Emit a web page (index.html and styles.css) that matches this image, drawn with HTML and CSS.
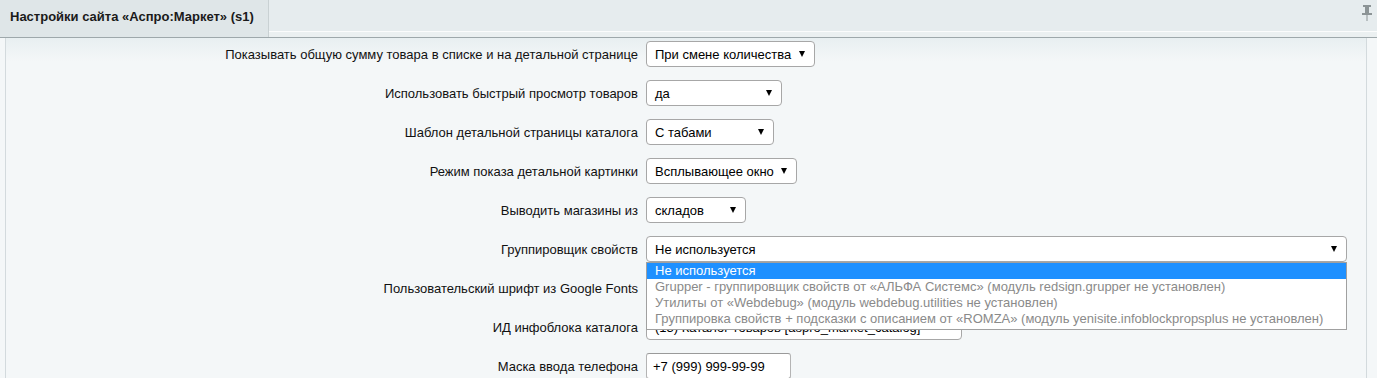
FILE: index.html
```html
<!DOCTYPE html>
<html lang="ru">
<head>
<meta charset="utf-8">
<title>Настройки сайта</title>
<link rel="stylesheet" href="styles.css">
</head>
<body>
<div class="header">
  <div class="tab">Настройки сайта «Аспро:Маркет» (s1)</div>
  <div class="header-rest">
    <div class="rest-top">
      <svg class="pin" width="10" height="16" viewBox="0 0 10 16">
        <rect x="1" y="0" width="8" height="2" fill="#8c9496"/>
        <rect x="3" y="2" width="4" height="6" fill="#8c9496"/>
        <rect x="0" y="8" width="10" height="2" fill="#8c9496"/>
        <rect x="4.5" y="10" width="1" height="6" fill="#8c9496"/>
      </svg>
    </div>
    <div class="rest-bottom"></div>
  </div>
</div>
<div class="panel">
  <div class="form">
    <div class="label">Показывать общую сумму товара в списке и на детальной странице</div>
    <div class="control"><div class="select w1"><span>При смене количества</span><span class="arrow"></span></div></div>

    <div class="label">Использовать быстрый просмотр товаров</div>
    <div class="control"><div class="select w2"><span>да</span><span class="arrow"></span></div></div>

    <div class="label">Шаблон детальной страницы каталога</div>
    <div class="control"><div class="select w3"><span>С табами</span><span class="arrow"></span></div></div>

    <div class="label">Режим показа детальной картинки</div>
    <div class="control"><div class="select w4"><span>Всплывающее окно</span><span class="arrow"></span></div></div>

    <div class="label">Выводить магазины из</div>
    <div class="control"><div class="select w5"><span>складов</span><span class="arrow"></span></div></div>

    <div class="label">Группировщик свойств</div>
    <div class="control dd-host">
      <div class="select w6"><span>Не используется</span><span class="arrow"></span></div>
      <ul class="dropdown">
        <li class="opt selected">Не используется</li>
        <li class="opt disabled">Grupper - группировщик свойств от «АЛЬФА Системс» (модуль redsign.grupper не установлен)</li>
        <li class="opt disabled">Утилиты от «Webdebug» (модуль webdebug.utilities не установлен)</li>
        <li class="opt disabled">Группировка свойств + подсказки с описанием от «ROMZA» (модуль yenisite.infoblockpropsplus не установлен)</li>
      </ul>
    </div>

    <div class="label">Пользовательский шрифт из Google Fonts</div>
    <div class="control"><div class="input w7"><span></span></div></div>

    <div class="label">ИД инфоблока каталога</div>
    <div class="control"><div class="select w7"><span>(13) Каталог товаров [aspro_market_catalog]</span><span class="arrow"></span></div></div>

    <div class="label">Маска ввода телефона</div>
    <div class="control"><div class="input w8"><span>+7 (999) 999-99-99</span></div></div>
  </div>
</div>
</body>
</html>
```
FILE: styles.css
```css
html, body {
  margin: 0;
  padding: 0;
}
body {
  background: #f4f7f8;
  font-family: "Liberation Sans", Arial, sans-serif;
  font-size: 13px;
  color: #000;
  height: 378px;
  overflow: hidden;
}
.header {
  display: flex;
  height: 37px;
  border-bottom: 1px solid #9ea8ab;
  background: #e6ecee;
}
.tab {
  width: 258px;
  padding-left: 10px;
  background: #dfe6e8;
  border-right: 1px solid #c9d1d3;
  font-weight: bold;
  font-size: 13px;
  line-height: 34px;
  color: #1a1a1a;
  white-space: nowrap;
}
.header-rest {
  flex: 1;
  display: flex;
  flex-direction: column;
}
.rest-top {
  height: 31px;
  display: flex;
  justify-content: flex-end;
  align-items: flex-start;
  padding-right: 5px;
  background: #e6ecee;
}
.pin {
  margin-top: 5px;
}
.rest-bottom {
  flex: 1;
  border-top: 1px solid #fbfcfc;
  background: #ebf0f1;
}
.panel {
  margin: 0 10px 0 5px;
  border-left: 1px solid #d3dadd;
  border-right: 1px solid #d3dadd;
  background: linear-gradient(#e8eff1 0, #f4f7f8 24px);
  height: 340px;
}
.form {
  display: grid;
  grid-template-columns: 632px 1fr;
  column-gap: 8px;
  row-gap: 13px;
  padding-top: 3px;
  align-items: center;
}
.label {
  text-align: right;
  white-space: nowrap;
  color: #111;
}
.control {
  display: flex;
}
.select, .input {
  box-sizing: border-box;
  height: 26px;
  background: #fff;
  border: 1px solid #a7a7a7;
  border-radius: 4px;
  display: flex;
  align-items: center;
  justify-content: space-between;
  padding: 0 9px 0 8px;
  white-space: nowrap;
  overflow: hidden;
}
.input {
  padding-left: 6px;
  border-color: #b4b4b4;
  border-top-color: #9a9a9a;
  border-radius: 3px;
}
.arrow {
  width: 0;
  height: 0;
  border-left: 3.5px solid transparent;
  border-right: 3.5px solid transparent;
  border-top: 6px solid #000;
  flex: none;
}
.w1 { width: 169px; }
.w2 { width: 136px; }
.w3 { width: 128px; }
.w4 { width: 151px; }
.w5 { width: 100px; }
.w6 { width: 701px; }
.w7 { width: 316px; }
.w8 { width: 145px; }
.dd-host {
  position: relative;
}
.dropdown {
  position: absolute;
  left: 0;
  top: 26px;
  z-index: 5;
  box-sizing: border-box;
  width: 701px;
  margin: 0;
  padding: 0 0 2px 0;
  list-style: none;
  background: #fff;
  border: 1px solid #a0a0a0;
}
.opt {
  height: 16px;
  line-height: 16px;
  padding-left: 8px;
  white-space: nowrap;
}
.opt.selected {
  background: #1e90ff;
  color: #fff;
}
.opt.disabled {
  color: #8a8a8a;
}
```
